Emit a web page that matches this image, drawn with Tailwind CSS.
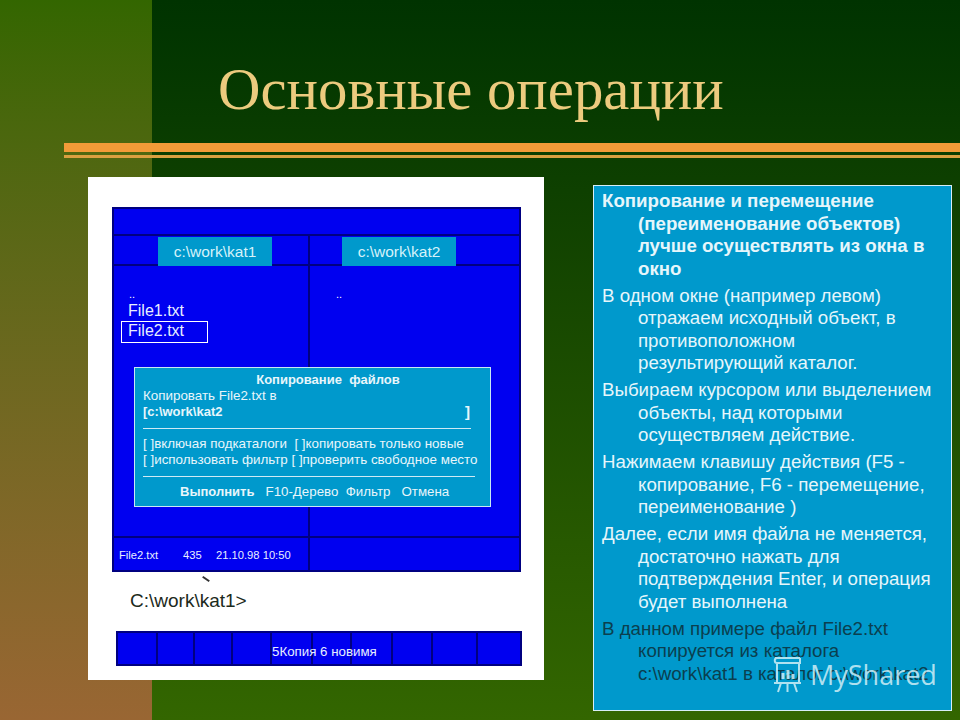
<!DOCTYPE html>
<html lang="ru">
<head>
  <meta charset="UTF-8">
  <title>Основные операции</title>
  <script src="https://cdn.jsdelivr.net/npm/@tailwindcss/browser@4"></script>
</head>
<body class="bg-black">

<div class="relative w-[960px] h-[720px] overflow-hidden bg-linear-to-b from-[#003300] to-[#336600] font-['Liberation_Sans',sans-serif]">
  <!-- left strip -->
  <div class="absolute left-0 top-0 w-[152px] h-full bg-linear-to-b from-[#336600] to-[#996633]"></div>

  <div class="relative">
    <h1 class="pl-[218px] pt-[55px] h-[143px] text-[58.800px] leading-[70px] text-[#eccb7e] font-['Liberation_Serif',serif]">Основные операции</h1>

    <!-- title rules -->
    <div class="ml-[64px] h-[9px] bg-[#f29b38]"></div>
    <div class="ml-[64px] mt-[3px] h-[3px] bg-[#d9a040]"></div>

    <div class="flex mt-[19px]">
      <!-- white slide picture -->
      <div class="ml-[88px] w-[456px] h-[503px] bg-white pt-[30px] pl-[24px]">
        <!-- commander window -->
        <div class="w-[409px] h-[365px] bg-[#0000f0] border-2 border-[#000080] flex flex-col text-white">
          <div class="h-[27px] border-b-2 border-[#000080]"></div>
          <div class="h-[30px] flex border-b-2 border-[#000080]">
            <div class="w-[196px] border-r-2 border-[#000080] pl-[44px] pt-[1px]">
              <div class="w-[114px] h-[29px] bg-[#0099cc] text-center text-[15.500px] leading-[30px] text-[#d5f2fa]">c:\work\kat1</div>
            </div>
            <div class="pl-[32px] pt-[1px]">
              <div class="w-[114px] h-[29px] bg-[#0099cc] text-center text-[15.500px] leading-[30px] text-[#d5f2fa]">c:\work\kat2</div>
            </div>
          </div>
          <div class="relative flex-1 flex border-b-2 border-[#000080]">
            <div class="w-[196px] border-r-2 border-[#000080] pt-[21px]">
              <div class="pl-[15px] text-[11px] leading-[14px]">..</div>
              <div class="pl-[14px] text-[16px] leading-[20px] text-[#e8eeff]">File1.txt</div>
              <div class="ml-[7px] w-[87px] h-[22px] border border-white pl-[6px] text-[16px] leading-[18px] text-[#e8eeff]">File2.txt</div>
            </div>
            <div class="pl-[26px] pt-[21px] text-[11px] leading-[14px]">..</div>
            <!-- copy dialog -->
            <div class="absolute left-[20px] top-[101px] w-[357px] h-[140px] bg-[#0099cc] border border-[#c8e8f4] pl-[8px] pt-[4px] text-[13.400px] leading-[16px] text-[#e8f6fb]">
              <div class="text-center text-[13px] font-bold pl-[23px] whitespace-pre">Копирование  файлов</div>
              <div>Копировать File2.txt в</div>
              <div class="flex w-[327px] justify-between text-[13px] font-bold"><span>[c:\work\kat2</span><span class="text-[15px]">]</span></div>
              <div class="h-[16px] w-[328px] flex items-center"><div class="w-full border-t border-[#cfeaf5]"></div></div>
              <div class="whitespace-pre">[ ]включая подкаталоги  [ ]копировать только новые</div>
              <div class="whitespace-pre">[ ]использовать фильтр [ ]проверить свободное место</div>
              <div class="h-[16px] w-[332px] flex items-center"><div class="w-full border-t border-[#cfeaf5]"></div></div>
              <div class="pl-[37px] text-[13.300px] whitespace-pre"><span class="text-[13px] font-bold">Выполнить</span>   F10-Дерево  Фильтр   Отмена</div>
            </div>
          </div>
          <div class="flex-none h-[32px] flex">
            <div class="w-[196px] border-r-2 border-[#000080] pl-[5px] flex text-[11.200px] leading-[34px] text-[#e8eeff] whitespace-pre">
              <span class="w-[64px]">File2.txt</span>
              <span class="w-[33px]">435</span>
              <span>21.10.98 10:50</span>
            </div>
          </div>
        </div>
        <!-- stray tick -->
        <div class="ml-[90px] mt-[6px] w-[8px] h-[2px] bg-[#333333] rotate-[35deg]"></div>
        <div class="pl-[18px] mt-[9px] h-[42px] text-[19px] leading-[24px] text-[#1c2a1c]">C:\work\kat1&gt;</div>
        <!-- function keys -->
        <div class="ml-[4px] w-[406px] h-[35px] bg-[#0000f0] border-2 border-[#000080] flex text-[13.300px] leading-[38px] text-[#e8eeff]">
          <div class="w-[40px] border-r-2 border-[#000080]"></div>
          <div class="w-[37px] border-r-2 border-[#000080]"></div>
          <div class="w-[38px] border-r-2 border-[#000080]"></div>
          <div class="w-[39px] border-r-2 border-[#000080]"></div>
          <div class="w-[41px] border-r-2 border-[#000080] relative"><span class="absolute left-0 whitespace-nowrap">5Копия 6 новимя</span></div>
          <div class="w-[39px] border-r-2 border-[#000080]"></div>
          <div class="w-[41px] border-r-2 border-[#000080]"></div>
          <div class="w-[40px] border-r-2 border-[#000080]"></div>
          <div class="w-[45px] border-r-2 border-[#000080]"></div>
        </div>
      </div>

      <!-- text panel -->
      <div class="ml-[49px] w-[359px] h-[526px] mt-[8px] bg-[#0099cc] border border-[#d8eef6] pl-[8px] pr-[13px] pt-[4px] text-[18.700px] leading-[22.500px] text-[#e6f6fb] flex flex-col gap-[4.500px] overflow-hidden">
        <p class="pl-[36px] -indent-[36px] font-bold">Копирование и перемещение (переименование объектов) лучше осуществлять из окна в окно</p>
        <p class="pl-[36px] -indent-[36px]">В одном окне (например левом) отражаем исходный объект, в противоположном результирующий каталог.</p>
        <p class="pl-[36px] -indent-[36px]">Выбираем курсором или выделением объекты, над которыми осуществляем действие.</p>
        <p class="pl-[36px] -indent-[36px]">Нажимаем клавишу действия (F5 - копирование, F6 - перемещение, переименование )</p>
        <p class="pl-[36px] -indent-[36px]">Далее, если имя файла не меняется, достаточно нажать для подтверждения Enter, и операция будет выполнена</p>
        <p class="pl-[36px] -indent-[36px] text-[#0b3f4f]">В данном примере файл File2.txt копируется из каталога c:\work\kat1 в каталог c:\work\kat2</p>
      </div>
    </div>
  </div>

  <!-- watermark -->
  <div class="absolute left-[772px] top-[655px] flex items-center gap-[7px] text-[#cfeef6]/85">
    <svg class="w-[31px] h-[39px]" viewBox="0 0 31 39" fill="none" stroke="currentColor" stroke-width="2">
      <path d="M3 3h25M5 3c-3 0-3 5 0 5h23v-5M5 8v20h22v-20M2 28h27M9 28l-3 9M15.500 28v9M22 28l3 9"/>
      <path d="M11 24v-6M16 24v-9M21 24v-5" stroke-width="3"/>
    </svg>
    <span class="text-[27px] leading-[36px] font-['Open_Sans',sans-serif]">MyShared</span>
  </div>
</div>

</body>
</html>
